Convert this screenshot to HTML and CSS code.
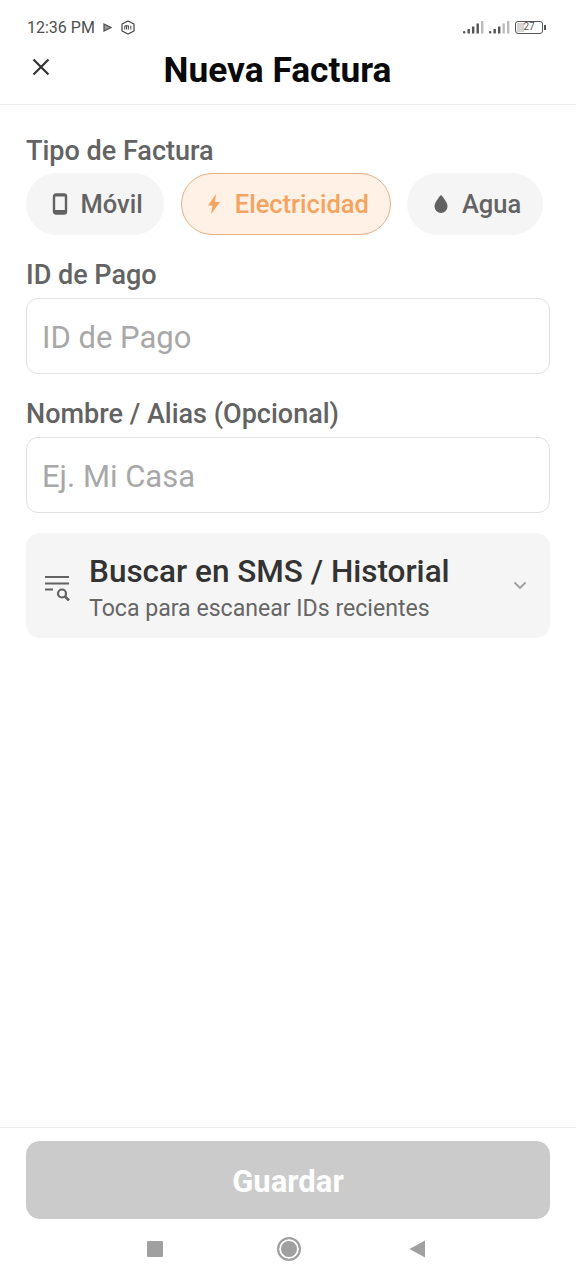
FILE: index.html
```html
<!DOCTYPE html>
<html lang="es">
<head>
<meta charset="utf-8">
<title>Nueva Factura</title>
<link rel="stylesheet" href="styles.css">
</head>
<body>
<div class="screen">
  <div class="status">
    <div class="status-left">
      <span class="time">12:36 PM</span>
      <svg class="st-play" width="9" height="9" viewBox="0 0 9 9"><path d="M1 1l7 3.5L1 8z" fill="#999" stroke="#555" stroke-width="1.3"/></svg>
      <svg class="st-mi" width="14" height="15" viewBox="0 0 14 15"><path d="M7 1l6 3v7l-6 3-6-3V4z" fill="none" stroke="#444" stroke-width="1.2" stroke-linejoin="round"/><path d="M3.800 9.500V5.800h3.600v3.700M5.600 5.800v3.700M9.800 5.800v3.700" fill="none" stroke="#444" stroke-width="1"/></svg>
    </div>
    <div class="status-right">
      <svg width="21" height="14" viewBox="0 0 21 14"><g fill="#555"><rect x="0" y="11" width="2.4" height="2.5" rx="1"/><rect x="4.500" y="9" width="2.400" height="4.500"/><rect x="9" y="6.500" width="2.400" height="7"/><rect x="13.500" y="3.500" width="2.400" height="10"/></g><rect x="18" y="1" width="2.400" height="12.500" fill="#bbb"/></svg>
      <svg width="21" height="14" viewBox="0 0 21 14"><g fill="#555"><rect x="0" y="11" width="2.400" height="2.500" rx="1"/><rect x="4.500" y="9" width="2.400" height="4.500"/><rect x="9" y="6.500" width="2.400" height="7"/></g><rect x="13.500" y="3.500" width="2.400" height="10" fill="#bbb"/><rect x="18" y="1" width="2.400" height="12.500" fill="#bbb"/></svg>
      <div class="battery"><span class="battery-fill"></span><span class="battery-num">27</span></div>
      <span class="battery-tip"></span>
    </div>
  </div>

  <header class="appbar">
    <button class="close" aria-label="Cerrar">
      <svg width="24" height="24" viewBox="0 0 24 24"><path d="M4.500 4.500l15 15M19.500 4.500l-15 15" fill="none" stroke="#333" stroke-width="2.200"/></svg>
    </button>
    <h1 class="title">Nueva Factura</h1>
  </header>

  <main class="content">
    <div class="label label-first">Tipo de Factura</div>
    <div class="chips">
      <div class="chip">
        <svg width="16" height="22" viewBox="0 0 16 22"><rect x="2" y="1.500" width="12" height="19" rx="2" fill="none" stroke="#616161" stroke-width="2.400"/><rect x="2" y="17" width="12" height="3.500" fill="#616161"/><rect x="2" y="1.500" width="12" height="2" fill="#616161"/></svg>
        <span>Móvil</span>
      </div>
      <div class="chip chip-active">
        <svg width="14" height="20" viewBox="0 0 14 20"><path d="M9 0L1 11.500h4.500L4 20l9-12H8z" fill="#f4a460"/></svg>
        <span>Electricidad</span>
      </div>
      <div class="chip">
        <svg width="16" height="20" viewBox="0 0 16 20"><path d="M8 1C8 1 1.500 7.500 1.500 12.500a6.500 6.500 0 0 0 13 0C14.500 7.500 8 1 8 1z" fill="#616161"/></svg>
        <span>Agua</span>
      </div>
    </div>

    <div class="label label-pago">ID de Pago</div>
    <div class="input">ID de Pago</div>

    <div class="label label-alias">Nombre / Alias (Opcional)</div>
    <div class="input">Ej. Mi Casa</div>

    <div class="scan">
      <svg class="scan-icon" width="28" height="28" viewBox="0 0 28 28"><path d="M2 4h24M2 10.500h24M2 16.500h8" fill="none" stroke="#616161" stroke-width="2.200"/><circle cx="19" cy="20.500" r="4" fill="none" stroke="#616161" stroke-width="2.200"/><path d="M22 23.500l4 4" stroke="#616161" stroke-width="2.600" fill="none"/></svg>
      <div class="scan-text">
        <div class="scan-title">Buscar en SMS / Historial</div>
        <div class="scan-sub">Toca para escanear IDs recientes</div>
      </div>
      <svg class="scan-chev" width="14" height="9" viewBox="0 0 14 9"><path d="M1.500 1.500L7 7l5.500-5.500" fill="none" stroke="#9e9e9e" stroke-width="1.800"/></svg>
    </div>
  </main>

  <footer class="footer">
    <button class="save">Guardar</button>
  </footer>

  <nav class="navbar">
    <span class="nav-square"></span>
    <span class="nav-circle"></span>
    <svg class="nav-back" width="16" height="18" viewBox="0 0 16 18"><path d="M16 0.500V17.500L0.500 9z" fill="#a0a0a0"/></svg>
  </nav>
</div>
</body>
</html>
```
FILE: styles.css
```css
* { box-sizing: border-box; }
html, body { margin: 0; padding: 0; background: #fff; }
body { font-family: Roboto, "Noto Sans", sans-serif; }
.screen { width: 576px; height: 1280px; display: flex; flex-direction: column; background: #fff; overflow: hidden; }

.status { height: 44px; padding: 16px 30px 0 27px; display: flex; justify-content: space-between; align-items: flex-start; flex: none; }
.status-left { display: flex; align-items: center; gap: 8px; height: 22px; color: #555; }
.time { font-size: 16px; color: #505050; }
.st-mi { margin-left: 1px; }
.status-right { display: flex; align-items: center; gap: 5px; height: 22px; }
.battery { position: relative; width: 28px; height: 13px; border: 1.4px solid #555; border-radius: 3px; display: flex; align-items: center; justify-content: center; }
.battery-fill { position: absolute; left: 1px; top: 1px; bottom: 1px; width: 7px; background: #d5d5d5; }
.battery-num { position: relative; font-size: 10px; line-height: 1; color: #555; }
.battery-tip { width: 2px; height: 5px; background: #555; margin-left: -4px; }

.appbar { position: relative; height: 61px; flex: none; border-bottom: 1px solid #ececec; display: flex; justify-content: center; align-items: flex-start; }
.close { position: absolute; left: 29px; top: 11px; width: 24px; height: 24px; padding: 0; border: 0; background: none; display: flex; }
.title { margin: 5px 0 0 -21px; font-size: 35.300px; line-height: 42px; font-weight: 700; color: #0a0a0a; }

.content { flex: 1; padding: 0 26px; display: flex; flex-direction: column; }
.label { font-size: 27px; line-height: 32px; font-weight: 500; color: #636363; }
.label-first { margin-top: 30px; }
.label-pago { margin-top: 24px; }
.label-alias { margin-top: 24px; }

.chips { display: flex; gap: 16px; margin-top: 6px; }
.chip { height: 62px; border-radius: 31px; background: #f5f5f5; padding: 0 21.500px 0 26px; display: flex; align-items: center; gap: 12.500px; font-size: 25.500px; font-weight: 500; color: #636363; }
.chip-active { margin-left: 1px; background: #fff1e5; border: 1.5px solid #e8b088; color: #f4a460; gap: 14px; padding-left: 24.500px; padding-right: 21.500px; }

.input { height: 76px; margin-top: 7px; border: 1.5px solid #e0e0e0; border-radius: 12px; padding: 3px 15px 0; display: flex; align-items: center; font-size: 31px; color: #a8a8a8; }

.scan { height: 105px; margin-top: 20px; border-radius: 14px; background: #f5f5f5; padding: 0 23px 0 17px; display: flex; align-items: center; }
.scan-icon { flex: none; margin-right: 18px; margin-top: 3px; }
.scan-text { flex: 1; margin-top: 6px; }
.scan-title { font-size: 31.500px; line-height: 38px; font-weight: 500; color: #333; }
.scan-sub { font-size: 23.100px; line-height: 30px; margin-top: 3px; color: #666; }
.scan-chev { flex: none; }

.footer { height: 91px; flex: none; border-top: 1px solid #ececec; padding: 13px 26px 0; }
.save { width: 100%; height: 78px; border: 0; border-radius: 14px; background: #cbcbcb; color: #fff; font-family: inherit; font-size: 31px; font-weight: 700; padding: 3px 0 0; }

.navbar { height: 62px; flex: none; display: flex; align-items: center; padding-left: 147px; }
.nav-square { width: 16px; height: 16px; background: #a0a0a0; border-radius: 1px; }
.nav-circle { width: 24px; height: 24px; margin-left: 114px; border-radius: 50%; background: #a0a0a0; border: 2px solid #a0a0a0; box-shadow: inset 0 0 0 2px #fff; }
.nav-back { margin-left: 108px; }
```
